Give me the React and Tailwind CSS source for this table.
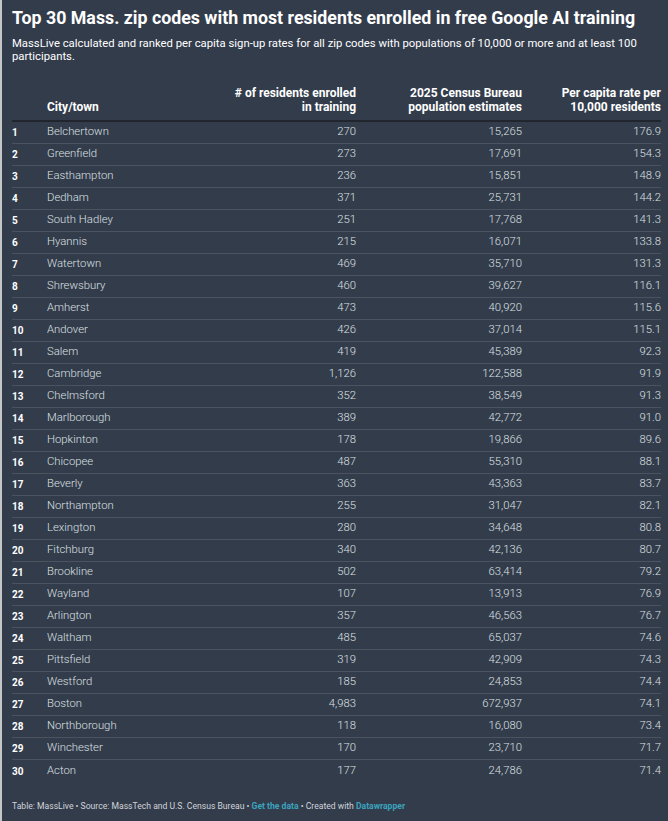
import React from "react";

const rows = [
  ["Belchertown", "270", "15,265", "176.9"],
  ["Greenfield", "273", "17,691", "154.3"],
  ["Easthampton", "236", "15,851", "148.9"],
  ["Dedham", "371", "25,731", "144.2"],
  ["South Hadley", "251", "17,768", "141.3"],
  ["Hyannis", "215", "16,071", "133.8"],
  ["Watertown", "469", "35,710", "131.3"],
  ["Shrewsbury", "460", "39,627", "116.1"],
  ["Amherst", "473", "40,920", "115.6"],
  ["Andover", "426", "37,014", "115.1"],
  ["Salem", "419", "45,389", "92.3"],
  ["Cambridge", "1,126", "122,588", "91.9"],
  ["Chelmsford", "352", "38,549", "91.3"],
  ["Marlborough", "389", "42,772", "91.0"],
  ["Hopkinton", "178", "19,866", "89.6"],
  ["Chicopee", "487", "55,310", "88.1"],
  ["Beverly", "363", "43,363", "83.7"],
  ["Northampton", "255", "31,047", "82.1"],
  ["Lexington", "280", "34,648", "80.8"],
  ["Fitchburg", "340", "42,136", "80.7"],
  ["Brookline", "502", "63,414", "79.2"],
  ["Wayland", "107", "13,913", "76.9"],
  ["Arlington", "357", "46,563", "76.7"],
  ["Waltham", "485", "65,037", "74.6"],
  ["Pittsfield", "319", "42,909", "74.3"],
  ["Westford", "185", "24,853", "74.4"],
  ["Boston", "4,983", "672,937", "74.1"],
  ["Northborough", "118", "16,080", "73.4"],
  ["Winchester", "170", "23,710", "71.7"],
  ["Acton", "177", "24,786", "71.4"],
];

const grid = "grid grid-cols-[35px_159px_150px_166px_139px]";

export default function App() {
  return (
    <div className="flex w-[668px] h-[821px] bg-[#333c4b] font-['Roboto',sans-serif] overflow-hidden">
      {/* page behind the embed peeks through on the left */}
      <div className="w-[2px] shrink-0 bg-[#c4c6c8]" />
      <div className="flex-1 pl-[10px] pr-[7px] pt-[7px]">
        <h1 className="text-[17.8px] leading-[22px] font-bold text-white">
          Top 30 Mass. zip codes with most residents enrolled in free Google AI training
        </h1>
        <p className="mt-[8px] text-[11.3px] leading-[13px] text-white">
          MassLive calculated and ranked per capita sign-up rates for all zip codes with populations of 10,000 or more and at least 100 participants.
        </p>

        <div className="mt-[23px]">
          <div className={`${grid} items-end border-b-2 border-[#21262e] pb-[6px] text-[12px] leading-[14px] font-bold text-white`}>
            <div />
            <div>City/town</div>
            <div className="text-right">
              # of residents enrolled
              <br />
              in training
            </div>
            <div className="text-right">
              2025 Census Bureau
              <br />
              population estimates
            </div>
            <div className="text-right">
              Per capita rate per
              <br />
              10,000 residents
            </div>
          </div>

          {rows.map((r, i) => (
            <div
              key={r[0]}
              className={`${grid} h-[22px] items-center text-[11.3px] font-light text-[#dde0e4] ${
                i < rows.length - 1 ? "border-b border-[#4b5361]" : ""
              }`}
            >
              <div className="text-[10px] font-bold text-white">{i + 1}</div>
              <div>{r[0]}</div>
              <div className="text-right">{r[1]}</div>
              <div className="text-right">{r[2]}</div>
              <div className="text-right">{r[3]}</div>
            </div>
          ))}
        </div>

        <div className="mt-[18px] text-[8.6px] leading-[12px] text-[#d0d4d9]">
          Table: MassLive • Source: MassTech and U.S. Census Bureau •{" "}
          <span className="font-bold text-[#3ba3bf]">Get the data</span> • Created with{" "}
          <span className="font-bold text-[#3ba3bf]">Datawrapper</span>
        </div>
      </div>
    </div>
  );
}
